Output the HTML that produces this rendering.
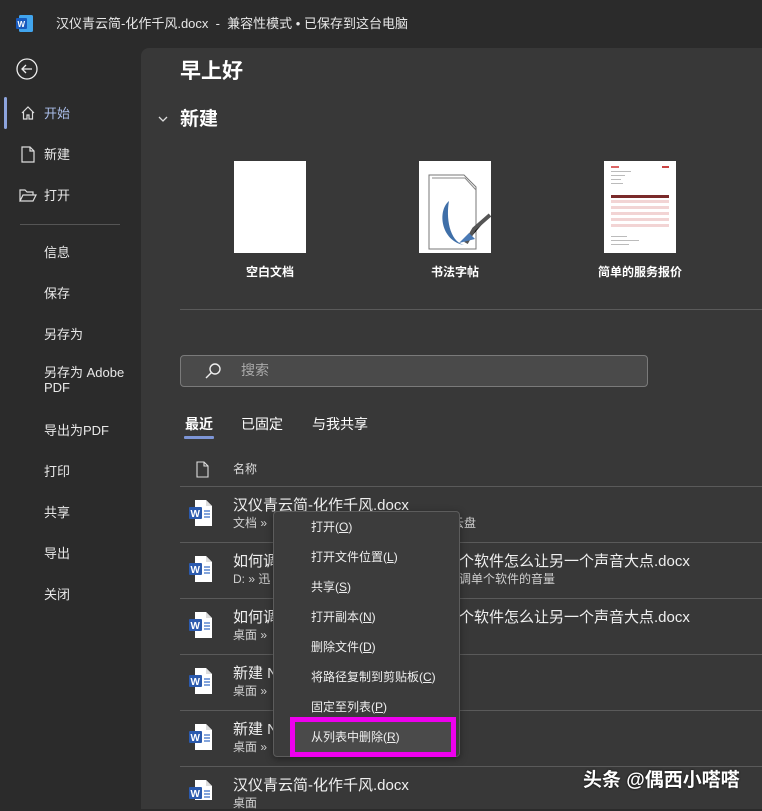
<!DOCTYPE html>
<html><head><meta charset="utf-8"><style>
*{margin:0;padding:0;box-sizing:border-box}
body{width:762px;height:809px;overflow:hidden;background:#2b2b2b;font-family:"Liberation Sans","Noto Sans CJK SC",sans-serif;color:#fff;position:relative}
.a{position:absolute}
.tx{margin-top:-2px}
.side{font-size:13px;color:#e8e8e8;margin-top:-2px}
.main{left:141px;top:48px;width:621px;height:761px;background:#383838;border-top-left-radius:8px}
.hr{height:1px;background:#5a5a5a}
.t1{font-size:15px;color:#f0f0f0;margin-top:-2px}
.t2{font-size:12px;color:#cfcfcf;margin-top:-2px}
.mi{font-size:12px;color:#eee;left:311px;margin-top:-1px}
</style></head><body>
<svg class="a" style="left:16px;top:15px" width="17" height="17"><rect x="3" y="0" width="14" height="17" rx="1.5" fill="#41a5ee"/><rect x="0" y="3" width="11" height="11" rx="1" fill="#185abd"/><text x="1.5" y="12" font-size="8" font-weight="bold" fill="#fff" font-family="Liberation Sans">W</text></svg>
<div class="a tx" style="left:56px;top:15px;font-size:13px;color:#e8e8e8">汉仪青云简-化作千风.docx&nbsp; - &nbsp;兼容性模式 • 已保存到这台电脑</div>
<svg class="a" style="left:16px;top:58px" width="22" height="22" fill="none" stroke="#eee" stroke-width="1.3"><circle cx="11" cy="11" r="10"/><path d="M16 11H6M10 7l-4 4 4 4"/></svg>
<div class="a" style="left:4px;top:97px;width:3px;height:32px;background:#8da4dd;border-radius:2px"></div>
<svg class="a" style="left:20px;top:105px" width="16" height="16" fill="none" stroke="#ddd" stroke-width="1.2"><path d="M2 8L8 2l6 6M3.5 7v7h3.5v-4h2v4h3.5V7"/></svg>
<div class="a side" style="left:44px;top:105px;color:#a9bce8">开始</div>
<svg class="a" style="left:21px;top:146px" width="14" height="17" fill="none" stroke="#ddd" stroke-width="1.2"><path d="M1 1h8l4 4v11H1zM9 1v4h4"/></svg>
<div class="a side" style="left:44px;top:146px">新建</div>
<svg class="a" style="left:19px;top:188px" width="18" height="15" fill="none" stroke="#ddd" stroke-width="1.2"><path d="M1 13V2h5l2 2h6v3M1 13l3-6h13l-3 6z"/></svg>
<div class="a side" style="left:44px;top:187px">打开</div>
<div class="a hr" style="left:20px;top:224px;width:100px;background:#555"></div>
<div class="a side" style="left:44px;top:244px">信息</div>
<div class="a side" style="left:44px;top:285px">保存</div>
<div class="a side" style="left:44px;top:326px">另存为</div>
<div class="a side" style="left:44px;top:367px;line-height:15px">另存为 Adobe<br>PDF</div>
<div class="a side" style="left:44px;top:422px">导出为PDF</div>
<div class="a side" style="left:44px;top:463px">打印</div>
<div class="a side" style="left:44px;top:504px">共享</div>
<div class="a side" style="left:44px;top:545px">导出</div>
<div class="a side" style="left:44px;top:586px">关闭</div>
<div class="a main"></div>
<div class="a tx" style="left:180px;top:57px;font-size:21px;font-weight:bold">早上好</div>
<svg class="a" style="left:157px;top:114px" width="12" height="10" fill="none" stroke="#ddd" stroke-width="1.3"><path d="M2 3l4 4 4-4"/></svg>
<div class="a tx" style="left:180px;top:106px;font-size:19px;font-weight:bold">新建</div>
<div class="a" style="left:234px;top:161px;width:72px;height:92px;background:#fff"></div>
<div class="a" style="left:419px;top:161px;width:72px;height:92px;background:#fff"></div>
<svg class="a" style="left:419px;top:161px" width="72" height="92"><path d="M10 14h35l12 12v62H10z" fill="#fff" stroke="#777"/><path d="M13 17h33l11 12" fill="none" stroke="#888"/><path d="M30 40c-12 10-8 40 15 44c-15-4-18-28-15-44z" fill="#3f6fa8"/><path d="M47 82l8-14l16-14" stroke="#555" stroke-width="4"/><path d="M40 82l10-10l6 6z" fill="#4a7ab5"/></svg>
<div class="a" style="left:604px;top:161px;width:72px;height:92px;background:#fff"></div>
<svg class="a" style="left:604px;top:161px" width="72" height="92"><rect x="7" y="5" width="8" height="2" fill="#d66"/><rect x="58" y="5" width="7" height="2" fill="#c44"/><g fill="#bbb"><rect x="7" y="10" width="20" height="1"/><rect x="7" y="14" width="14" height="1"/><rect x="7" y="18" width="10" height="1"/><rect x="7" y="22" width="12" height="1"/></g><rect x="7" y="34" width="58" height="3" fill="#7a2a2a"/><g fill="#f2d4d4"><rect x="7" y="39" width="58" height="3"/><rect x="7" y="45" width="58" height="3"/><rect x="7" y="51" width="58" height="3"/><rect x="7" y="57" width="58" height="3"/><rect x="7" y="63" width="58" height="3"/></g><g fill="#bbb"><rect x="7" y="75" width="16" height="1"/><rect x="7" y="79" width="28" height="1"/><rect x="7" y="83" width="18" height="1"/></g></svg>
<div class="a tx" style="left:246px;top:265px;font-size:12px;font-weight:bold">空白文档</div>
<div class="a tx" style="left:431px;top:265px;font-size:12px;font-weight:bold">书法字帖</div>
<div class="a tx" style="left:598px;top:265px;font-size:12px;font-weight:bold">简单的服务报价</div>
<div class="a hr" style="left:180px;top:309px;width:582px"></div>
<div class="a" style="left:180px;top:355px;width:468px;height:32px;background:#4a4a4a;border:1px solid #7a7a7a;border-radius:4px"></div>
<svg class="a" style="left:204px;top:362px" width="18" height="18" fill="none" stroke="#eee" stroke-width="1.4"><circle cx="11" cy="7" r="5"/><path d="M7.5 10.5L2 16"/></svg>
<div class="a tx" style="left:241px;top:362px;font-size:14px;color:#aaa">搜索</div>
<div class="a tx" style="left:185px;top:416px;font-size:14px;font-weight:bold;color:#fff">最近</div>
<div class="a" style="left:184px;top:436px;width:30px;height:3px;background:#7d95d6;border-radius:1px"></div>
<div class="a tx" style="left:241px;top:416px;font-size:14px">已固定</div>
<div class="a tx" style="left:312px;top:416px;font-size:14px">与我共享</div>
<svg class="a" style="left:196px;top:461px" width="14" height="17" fill="none" stroke="#ddd" stroke-width="1.1"><path d="M1 1h7l4 4v11H1zM8 1v4h4"/></svg>
<div class="a tx" style="left:233px;top:462px;font-size:12px;color:#ddd">名称</div>
<div class="a hr" style="left:180px;top:486px;width:582px"></div>
<div class="a hr" style="left:180px;top:542px;width:582px"></div>
<div class="a hr" style="left:180px;top:598px;width:582px"></div>
<div class="a hr" style="left:180px;top:654px;width:582px"></div>
<div class="a hr" style="left:180px;top:710px;width:582px"></div>
<div class="a hr" style="left:180px;top:766px;width:582px"></div>
<svg class="a" style="left:189px;top:500px" width="26" height="300">
<defs><g id="w"><path d="M6 0h11l6 6v20H6z" fill="#fff"/><path d="M17 0v6h6" fill="#ddd"/><rect x="0" y="7" width="13" height="12" rx="1" fill="#2b5aae"/><text x="1.5" y="17" font-size="10" font-weight="bold" fill="#fff" font-family="Liberation Sans">W</text><path d="M15 11h6M15 14h6M15 17h6" stroke="#3a6fc8" stroke-width="1.2"/></g></defs>
<use href="#w" y="0"/><use href="#w" y="56"/><use href="#w" y="112"/><use href="#w" y="168"/><use href="#w" y="224"/><use href="#w" y="280"/></svg>
<div class="a t1" style="left:233px;top:496px">汉仪青云简-化作千风.docx</div>
<div class="a t2" style="left:233px;top:516px">文档 »</div>
<div class="a t2" style="left:452px;top:516px">云盘</div>
<div class="a t1" style="left:233px;top:552px">如何调</div>
<div class="a t1" style="left:459px;top:552px">个软件怎么让另一个声音大点.docx</div>
<div class="a t2" style="left:233px;top:572px">D: » 迅</div>
<div class="a t2" style="left:459px;top:572px">调单个软件的音量</div>
<div class="a t1" style="left:233px;top:608px">如何调</div>
<div class="a t1" style="left:459px;top:608px">个软件怎么让另一个声音大点.docx</div>
<div class="a t2" style="left:233px;top:628px">桌面 »</div>
<div class="a t1" style="left:233px;top:664px">新建 N</div>
<div class="a t2" style="left:233px;top:684px">桌面 »</div>
<div class="a t1" style="left:233px;top:720px">新建 N</div>
<div class="a t2" style="left:233px;top:740px">桌面 »</div>
<div class="a t1" style="left:233px;top:776px">汉仪青云简-化作千风.docx</div>
<div class="a t2" style="left:233px;top:796px">桌面</div>
<div class="a" style="left:273px;top:511px;width:187px;height:246px;background:#3c3c3c;border:1px solid #5c5c5c;border-radius:4px;box-shadow:0 2px 8px rgba(0,0,0,.4)"></div>
<div class="a mi" style="top:519px">打开(<u>O</u>)</div>
<div class="a mi" style="top:549px">打开文件位置(<u>L</u>)</div>
<div class="a mi" style="top:579px">共享(<u>S</u>)</div>
<div class="a mi" style="top:609px">打开副本(<u>N</u>)</div>
<div class="a mi" style="top:639px">删除文件(<u>D</u>)</div>
<div class="a mi" style="top:669px">将路径复制到剪贴板(<u>C</u>)</div>
<div class="a mi" style="top:699px">固定至列表(<u>P</u>)</div>
<div class="a" style="left:290px;top:717px;width:166px;height:40px;border:5px solid #ee00ee;background:#4a4a4a"></div>
<div class="a mi" style="top:729px">从列表中删除(<u>R</u>)</div>
<div class="a" style="left:583px;top:765px;font-size:19px;font-weight:bold;color:#fff;text-shadow:0 0 2px #000">头条 @偶西小嗒嗒</div>
</body></html>
